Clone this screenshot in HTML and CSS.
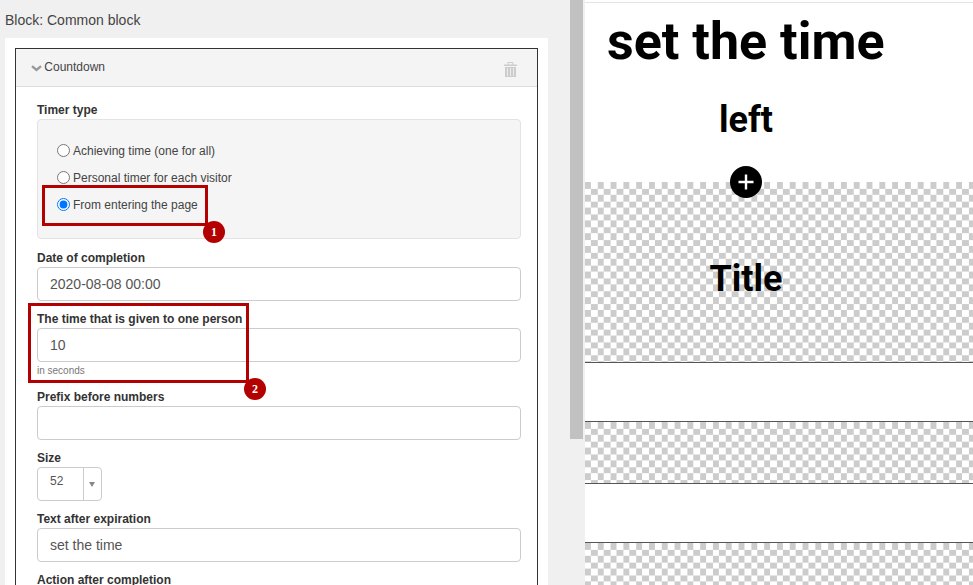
FILE: index.html
```html
<!DOCTYPE html>
<html lang="en">

<head>
  <meta charset="UTF-8">
  <title>Countdown block</title>
  <link rel="stylesheet" href="styles.css">
</head>

<body>
  <div class="page">
    <div class="sidebar">
      <h1 class="block-name">Block: Common block</h1>
      <div class="card">
        <div class="panel">
          <div class="panel-head">
            <span class="panel-title">
              <svg class="chevron" width="11" height="7" viewBox="0 0 11 7"><path d="M1 1.200 5.500 5 10 1.200" fill="none" stroke="#999" stroke-width="2.400"/></svg>
              Countdown
            </span>
            <svg class="trash" width="13" height="15" viewBox="0 0 13 15">
              <path d="M4 3V0.500H9V3" fill="none" stroke="#ccc"/>
              <rect x="0" y="2.500" width="13" height="1.500" fill="#ccc"/>
              <rect x="1" y="5" width="11" height="10" fill="#ccc"/>
              <path d="M3.500 6v8M6.500 6v8M9.500 6v8" stroke="#ececec"/>
            </svg>
          </div>
          <div class="panel-body">
            <div class="field field-well">
              <label class="label">Timer type</label>
              <div class="well">
                <label class="radio"><input type="radio" name="timer">Achieving time (one for all)</label>
                <label class="radio"><input type="radio" name="timer">Personal timer for each visitor</label>
                <label class="radio"><input type="radio" name="timer" checked>From entering the page</label>
              </div>
            </div>
            <div class="field">
              <label class="label">Date of completion</label>
              <input class="input" type="text" value="2020-08-08 00:00">
            </div>
            <div class="field">
              <label class="label">The time that is given to one person</label>
              <input class="input" type="text" value="10">
              <div class="help">in seconds</div>
            </div>
            <div class="field">
              <label class="label">Prefix before numbers</label>
              <input class="input" type="text">
            </div>
            <div class="field">
              <label class="label">Size</label>
              <div class="size-select">
                <span class="size-value">52</span>
                <span class="size-arrow"></span>
              </div>
            </div>
            <div class="field">
              <label class="label">Text after expiration</label>
              <input class="input" type="text" value="set the time">
            </div>
            <div class="field">
              <label class="label">Action after completion</label>
            </div>
          </div>
        </div>
      </div>

      <div class="mark mark-one"></div>
      <div class="badge badge-one">1</div>
      <div class="mark mark-two"></div>
      <div class="badge badge-two">2</div>
    </div>

    <div class="scrollbar"><div class="scroll-thumb"></div></div>

    <div class="preview">
      <h2 class="big-title">set the time</h2>
      <h3 class="sub-title">left</h3>
      <div class="checker checker-main">
        <span class="add-btn">
          <svg width="20" height="20" viewBox="0 0 20 20"><path d="M2.500 10h15M10 2.500v15" stroke="#fff" stroke-width="2.400"/></svg>
        </span>
        <h3 class="main-title">Title</h3>
      </div>
      <div class="row-white"></div>
      <div class="checker row-check"></div>
      <div class="row-white"></div>
      <div class="checker row-check"></div>
    </div>
  </div>
</body>

</html>
```

FILE: styles.css
```css
html, body {
  margin: 0;
  height: 100%;
  overflow: hidden;
}
body {
  font-family: "Liberation Sans", Arial, sans-serif;
  background-color: #fff;
}
.page {
  display: flex;
  height: 585px;
}
.sidebar {
  position: relative;
  width: 570px;
  flex: none;
  background-color: #f0f0f0;
  padding: 12px 22px 0 5px;
  box-sizing: border-box;
  overflow: hidden;
}
.block-name {
  margin: 0 0 9px;
  font-size: 14px;
  font-weight: normal;
  line-height: 17px;
  color: #444;
}
.card {
  background-color: #fff;
  padding: 10px 10px 0;
}
.panel {
  border: 1px solid #333;
}
.panel-head {
  display: flex;
  justify-content: space-between;
  align-items: center;
  height: 37px;
  padding: 0 20px 0 15px;
  background-color: #f4f4f4;
  border-bottom: 1px solid #ddd;
}
.panel-title {
  font-size: 12px;
  color: #444;
  margin-bottom: 2px;
}
.chevron {
  margin-right: -1px;
  vertical-align: -1px;
}
.trash {
  margin-top: 3px;
}
.panel-body {
  padding: 16px 16px 0 21px;
}
.field {
  margin-bottom: 11px;
}
.field-well {
  margin-bottom: 12px;
}
.label {
  display: block;
  font-size: 12px;
  font-weight: bold;
  line-height: 14px;
  color: #333;
  margin-bottom: 2px;
}
.well {
  height: 120px;
  box-sizing: border-box;
  padding: 17px 19px 0;
  background-color: #f5f5f5;
  border: 1px solid #e3e3e3;
  border-radius: 4px;
}
.radio {
  display: flex;
  align-items: center;
  height: 27px;
  font-size: 12px;
  color: #444;
}
.radio input {
  width: 13px;
  height: 13px;
  margin: 0 3px 0 0;
}
.input {
  display: block;
  width: 100%;
  height: 34px;
  box-sizing: border-box;
  padding: 0 12px;
  border: 1px solid #ccc;
  border-radius: 4px;
  font-family: inherit;
  font-size: 14px;
  color: #555;
}
.help {
  font-size: 10px;
  line-height: 11px;
  color: #777;
  margin-top: 3px;
  padding-bottom: 3px;
}
.size-select {
  display: flex;
  width: 65px;
  height: 34px;
  box-sizing: border-box;
  border: 1px solid #ccc;
  border-radius: 4px;
  font-size: 12px;
  color: #555;
}
.size-value {
  width: 46px;
  padding-left: 12px;
  box-sizing: border-box;
  line-height: 27px;
  border-right: 1px solid #ccc;
}
.size-arrow {
  width: 0;
  height: 0;
  margin: 14px 0 0 5px;
  border-left: 3.500px solid transparent;
  border-right: 3.500px solid transparent;
  border-top: 5px solid #888;
}
.mark {
  position: absolute;
  border: 3px solid #b30000;
  box-sizing: border-box;
}
.mark-one {
  left: 42px;
  top: 185px;
  width: 166px;
  height: 41px;
}
.mark-two {
  left: 28px;
  top: 303px;
  width: 221px;
  height: 80px;
}
.badge {
  position: absolute;
  width: 22px;
  height: 22px;
  border-radius: 50%;
  background-color: #b30000;
  color: #fff;
  font-family: "Liberation Serif", serif;
  font-size: 12px;
  font-weight: bold;
  line-height: 22px;
  text-align: center;
}
.badge-one {
  left: 203px;
  top: 221px;
}
.badge-two {
  left: 244px;
  top: 378px;
}
.scrollbar {
  width: 15px;
  flex: none;
  background-color: #f0f0f0;
}
.scroll-thumb {
  width: 13px;
  height: 439px;
  background-color: #c1c1c1;
}
.preview {
  flex: 1;
  min-width: 0;
  padding-top: 2px;
  font-family: Roboto, sans-serif;
  color: #000;
  overflow: hidden;
}
.big-title {
  margin: 0;
  padding-left: 22px;
  height: 82px;
  border-top: 1px solid #e4e4e4;
  font-size: 52px;
  font-weight: bold;
  line-height: 78px;
}
.sub-title {
  margin: 0;
  width: 322px;
  height: 97px;
  font-size: 36px;
  font-weight: bold;
  line-height: 70px;
  text-align: center;
}
.checker {
  background-image: conic-gradient(#ccc 25%, #fff 0 50%, #ccc 0 75%, #fff 0);
  background-size: 12.800px 12.800px;
  background-position: -6.900px 0;
}
.checker-main {
  position: relative;
  height: 180px;
  border-bottom: 1px solid #555;
}
.add-btn {
  position: absolute;
  left: 145px;
  top: -16px;
  display: flex;
  justify-content: center;
  align-items: center;
  width: 32px;
  height: 32px;
  border-radius: 50%;
  background-color: #000;
}
.main-title {
  margin: 0;
  width: 322px;
  padding-top: 76px;
  font-size: 36px;
  font-weight: bold;
  line-height: 42px;
  text-align: center;
}
.row-white {
  height: 58px;
  border-bottom: 1px solid #555;
}
.row-check {
  height: 61px;
  border-bottom: 1px solid #555;
}
```
